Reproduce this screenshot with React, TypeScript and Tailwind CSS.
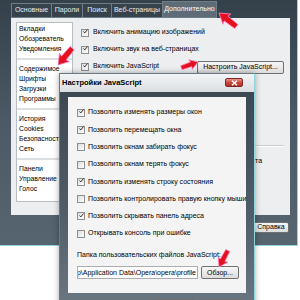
import React from "react";

const tabs = ["Основные", "Пароли", "Поиск", "Веб-страницы", "Дополнительно"];
const tabWidths = ["w-[41px]", "w-[32px]", "w-[30px]", "w-[52px]", "w-[55px]"];

const sections = [
  ["Вкладки", "Обозреватель", "Уведомления"],
  ["Содержимое", "Шрифты", "Загрузки", "Программы"],
  ["История", "Cookies", "Безопасность", "Сеть"],
  ["Панели", "Управление", "Голос"],
];

const jsOptions: [string, boolean][] = [
  ["Позволить изменять размеры окон", true],
  ["Позволить перемещать окна", true],
  ["Позволить окнам забирать фокус", false],
  ["Позволить окнам терять фокус", false],
  ["Позволить изменять строку состояния", true],
  ["Позволить контролировать правую кнопку мыши", false],
  ["Позволить скрывать панель адреса", true],
  ["Открывать консоль при ошибке", false],
];

function Checkbox({ checked }: { checked: boolean }) {
  return (
    <div className="w-[8px] h-[8px] shrink-0 border border-[#8e8f8f] bg-gradient-to-br from-[#dcdcdc] to-white flex items-center justify-center">
      {checked && (
        <svg width="9" height="9" viewBox="0 0 9 9" className="-mt-[2px] ml-[1px]">
          <path d="M1 4.5 L3.3 7 L8 1" fill="none" stroke="#1c1c1c" strokeWidth="1.6" />
        </svg>
      )}
    </div>
  );
}

function Button({ label, className }: { label: string; className: string }) {
  return (
    <div
      className={`${className} shrink-0 border border-[#707070] rounded-[2px] bg-gradient-to-b from-[#f6f6f6] to-[#dddddd] flex items-center justify-center text-[7px] text-black whitespace-nowrap`}
    >
      {label}
    </div>
  );
}

function Arrow({ d }: { d: string }) {
  return (
    <g transform={d}>
      <polygon points="-22,-2.6 -9,-3 -10,-6.5 0,0 -10,6.5 -9,3 -22,2.6" fill="#e5101d" stroke="#ff7fc0" strokeWidth="0.8" />
    </g>
  );
}

export default function App() {
  return (
    <div className="relative w-[300px] h-[300px] overflow-hidden bg-white font-['Liberation_Sans',Arial,sans-serif]">
      {/* preferences window */}
      <div className="absolute left-0 top-0 w-[298px] h-[246px] bg-gradient-to-b from-[#34414b] via-[#4b5a66] to-[#56656f] border-r border-b border-[#8fd6de] flex flex-col">
        <div className="flex h-[18px] pl-[12px] pt-[3px]">
          {tabs.map((t, i) => (
            <div
              key={t}
              className={`${tabWidths[i]} h-[15px] border border-[#6f7d87] -ml-px flex items-center justify-center text-[7px] whitespace-nowrap ${
                i === 4 ? "bg-[#5e6c77] text-white -mt-[2px] h-[17px]" : "bg-[#36434d] text-[#e6eaed]"
              }`}
            >
              {t}
            </div>
          ))}
        </div>
        <div className="ml-[11px] w-[279px] h-[197px] bg-[#eceef0] flex pt-[4px] pl-[5px] text-[7px] text-black">
          <div className="w-[57px] shrink-0 h-[180px] bg-white border border-[#b9bec2] pt-[1px] pl-[2px] text-[6.8px]">
            {sections.map((group, gi) => (
              <div key={gi}>
                {gi > 0 && (
                  <div className="h-[10px] flex items-center -ml-[2px]">
                    <div className="w-full h-[2px] bg-[#dcdfe1]" />
                  </div>
                )}
                {group.map((s) => (
                  <div key={s} className="h-[10px] leading-[10px] whitespace-nowrap">
                    {s}
                  </div>
                ))}
              </div>
            ))}
          </div>
          <div className="flex-1 pl-[8px] pr-[6px] pt-[2px]">
            {["Включить анимацию изображений", "Включить звук на веб-страницах"].map((t) => (
              <div key={t} className="h-[17px] flex items-center gap-[4px]">
                <Checkbox checked />
                <span className="whitespace-nowrap">{t}</span>
              </div>
            ))}
            <div className="h-[17px] flex items-center justify-between">
              <div className="flex items-center gap-[4px]">
                <Checkbox checked />
                <span className="whitespace-nowrap">Включить JavaScript</span>
              </div>
              <Button label="Настроить JavaScript..." className="w-[87px] h-[13px] mt-[2px]" />
            </div>
            <div className="mt-[70px] h-[2px] border-t border-[#c9ccce] bg-white" />
            <div className="mt-[9px] pl-[174px] whitespace-nowrap">та</div>
          </div>
        </div>
        <div className="flex justify-end gap-[5px] pr-[8px] pt-[7px]">
          <Button label="OK" className="w-[36px] h-[11px]" />
          <Button label="Отмена" className="w-[36px] h-[11px]" />
          <Button label="Справка" className="w-[36px] h-[11px]" />
        </div>
      </div>

      {/* JavaScript settings dialog */}
      <div className="absolute left-[59px] top-[73px] w-[196px] h-[240px] border border-[#6c7982] border-r-[#8fd6de] flex flex-col shadow-[0_0_6px_rgba(0,0,0,0.35)]">
        <div className="h-[18px] shrink-0 bg-gradient-to-b from-[#f2f4f5] to-[#dcdfe2] flex items-center justify-between pl-[2px] pr-[11px]">
          <span className="text-[7.5px] font-bold text-black whitespace-nowrap">Настройки JavaScript</span>
          <div className="w-[18px] h-[9px] -mt-[1px] rounded-[2px] border border-[#7a2a26] bg-gradient-to-b from-[#e9938a] via-[#c9473d] to-[#b52d22] flex items-center justify-center">
            <svg width="7" height="6" viewBox="0 0 7 6">
              <path d="M1 0.8 L6 5.2 M6 0.8 L1 5.2" stroke="white" strokeWidth="1.5" />
            </svg>
          </div>
        </div>
        <div className="flex-1 bg-gradient-to-b from-[#3c4953] via-[#4d5b66] to-[#6c7882] pt-[5px] pl-[8px] pr-[8px]">
          <div className="h-[196px] bg-[#f4f4f4] pl-[9px] pt-[7px] text-[7px] text-black">
            {jsOptions.map(([t, c]) => (
              <div key={t} className="h-[17.3px] flex items-center gap-[3px]">
                <Checkbox checked={c} />
                <span className="whitespace-nowrap">{t}</span>
              </div>
            ))}
            <div className="mt-[8px] h-[10px] leading-[10px] whitespace-nowrap">
              Папка пользовательских файлов JavaScript:
            </div>
            <div className="mt-[6px] flex items-center gap-[3px]">
              <div className="w-[121px] h-[13px] bg-white border border-[#abadb3] overflow-hidden flex justify-end items-center pr-[1px]">
                <span className="whitespace-nowrap">C:\Documents and Settings\Администратор\Application Data\Opera\opera\profile</span>
              </div>
              <Button label="Обзор..." className="w-[38px] h-[13px]" />
            </div>
          </div>
          <div className="flex justify-end gap-[5px] pt-[6px] pr-[1px]">
            <Button label="OK" className="w-[44px] h-[13px]" />
            <Button label="Отмена" className="w-[46px] h-[13px]" />
          </div>
        </div>
      </div>

      {/* red pointer arrows */}
      <svg className="absolute inset-0 pointer-events-none" width="300" height="300" viewBox="0 0 300 300">
        <Arrow d="translate(219 13) rotate(218)" />
        <Arrow d="translate(58 65) rotate(130)" />
        <Arrow d="translate(198 62) rotate(-19) scale(0.8)" />
        <Arrow d="translate(219 267) rotate(118) scale(0.85)" />
      </svg>
    </div>
  );
}
